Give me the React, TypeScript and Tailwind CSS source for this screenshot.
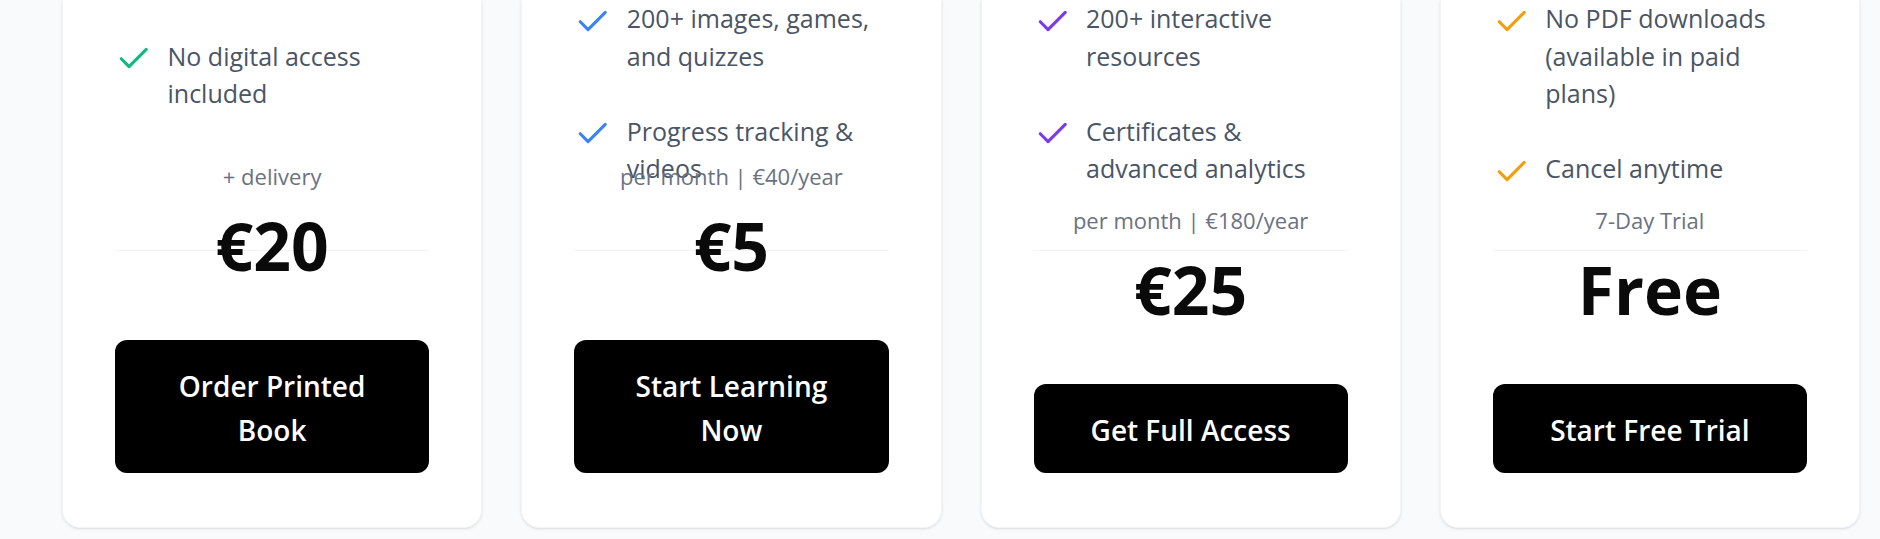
import { Check } from 'lucide-react'

interface Plan {
    features: string[]
    check: string
    topPad: string
    note: string
    price: string
    cta: string
}

const plans: Plan[] = [
    {
        features: ['No digital access included'],
        check: 'text-[#10b981]',
        topPad: 'pt-[37.5px]',
        note: '+ delivery',
        price: '€20',
        cta: 'Order Printed Book',
    },
    {
        features: ['200+ images, games, and quizzes', 'Progress tracking & videos'],
        check: 'text-[#3b82f6]',
        topPad: 'pt-0',
        note: 'per month | €40/year',
        price: '€5',
        cta: 'Start Learning Now',
    },
    {
        features: ['200+ interactive resources', 'Certificates & advanced analytics'],
        check: 'text-[#7c3aed]',
        topPad: 'pt-0',
        note: 'per month | €180/year',
        price: '€25',
        cta: 'Get Full Access',
    },
    {
        features: ['No PDF downloads (available in paid plans)', 'Cancel anytime'],
        check: 'text-[#f59e0b]',
        topPad: 'pt-0',
        note: '7-Day Trial',
        price: 'Free',
        cta: 'Start Free Trial',
    },
]

const PlanCard = ({ plan }: { plan: Plan }) => {
    return (
        <div className="grid grid-cols-1 h-[528px] bg-white rounded-b-[18px] border border-t-0 border-gray-100 shadow-sm px-[52px]">
            {/* top: feature list + divider */}
            <div className="col-start-1 row-start-1 self-start h-[251px] border-b border-gray-100">
                <ul className={`${plan.topPad} space-y-[37.5px]`}>
                    {plan.features.map((f) => (
                        <li key={f} className="flex items-start gap-[15px]">
                            <Check className={`w-[37.5px] h-[37.5px] shrink-0 mt-[2.5px] ${plan.check}`} strokeWidth={2} />
                            <span className="text-[25px] leading-[37.5px] text-gray-600">{f}</span>
                        </li>
                    ))}
                </ul>
            </div>

            {/* bottom: price + button, sits over the list when it runs long */}
            <div className="col-start-1 row-start-1 self-end pb-[54px] text-center">
                <p className="text-[22px] leading-[31px] text-gray-500">{plan.note}</p>
                <p className="mt-[20px] text-[66px] leading-none font-bold text-[#0a0a0a]">{plan.price}</p>
                <button className="mt-[62px] w-full rounded-[12px] bg-black text-white px-[37px] pt-[24px] pb-[21px] text-[28px] leading-[44px] font-semibold">
                    {plan.cta}
                </button>
            </div>
        </div>
    )
}

const App = () => {
    return (
        <div className="h-[539px] overflow-hidden bg-gray-50 font-['Open_Sans',sans-serif]">
            <div className="grid grid-cols-4 gap-[39px] pl-[62px] pr-[20px]">
                {plans.map((p) => (
                    <PlanCard key={p.cta} plan={p} />
                ))}
            </div>
        </div>
    )
}

export default App
